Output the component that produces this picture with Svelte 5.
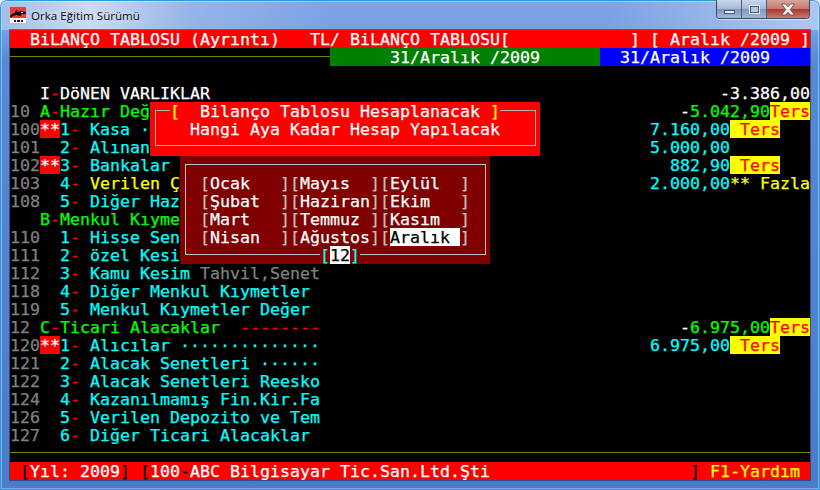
<script>
  const g = 'gray', c = 'cyan', w = 'white', l = 'lime', r = 'red', y = 'yellow';
  const STAR = 'star', T = 'ters';

  function build(items) {
    let col = 0;
    const out = [];
    for (const [at, text, cls] of items) {
      if (at > col) out.push({ text: ' '.repeat(at - col), cls: '' });
      out.push({ text, cls });
      col = at + [...text].length;
    }
    return out;
  }

  function acct(code, star, num, label, labelCls = c) {
    const items = [[0, code, g]];
    if (star) items.push([3, '**', STAR]);
    items.push([5, num, c], [6, '-', r], [8, label, labelCls]);
    return items;
  }

  const rows = [
    [[2, 'BiLANÇO TABLOSU (Ayrıntı)', 'barw'], [30, 'TL/ BiLANÇO TABLOSU[', 'barw'], [62, '] [ Aralık /2009 ]', 'barw']],
    [],
    [],
    [[3, 'I', w], [4, '-', r], [5, 'DöNEN VARLIKLAR', w], [71, '-3.386,00', w]],
    [[0, '10', g], [3, 'A', l], [4, '-', r], [5, 'Hazır Değ', l], [67, '-', w], [68, '5.042,90', l], [76, 'Ters', T]],
    [...acct('100', true, '1', 'Kasa ·'), [64, '7.160,00', c], [72, ' Ters', T]],
    [...acct('101', false, '2', 'Alınan'), [64, '5.000,00', c]],
    [...acct('102', true, '3', 'Bankalar'), [66, '882,90', c], [72, ' Ters', T]],
    [...acct('103', false, '4', 'Verilen Ç', y), [64, '2.000,00', c], [72, '** Fazla', y]],
    [...acct('108', false, '5', 'Diğer Haz')],
    [[3, 'B', l], [4, '-', r], [5, 'Menkul Kıyme', l]],
    [...acct('110', false, '1', 'Hisse Sen')],
    [...acct('111', false, '2', 'özel Kesi')],
    [...acct('112', false, '3', 'Kamu Kesim'), [19, 'Tahvil,Senet', g]],
    [...acct('118', false, '4', 'Diğer Menkul Kıymetler')],
    [...acct('119', false, '5', 'Menkul Kıymetler Değer')],
    [[0, '12', g], [3, 'C', l], [4, '-', r], [5, 'Ticari Alacaklar', l], [23, '--------', r], [67, '-', w], [68, '6.975,00', l], [76, 'Ters', T]],
    [...acct('120', true, '1', 'Alıcılar'), [17, '··············', c], [64, '6.975,00', c], [72, ' Ters', T]],
    [...acct('121', false, '2', 'Alacak Senetleri'), [25, '······', c]],
    [...acct('122', false, '3', 'Alacak Senetleri Reesko')],
    [...acct('124', false, '4', 'Kazanılmamış Fin.Kir.Fa')],
    [...acct('126', false, '5', 'Verilen Depozito ve Tem')],
    [...acct('127', false, '6', 'Diğer Ticari Alacaklar')],
    [],
  ].map(build);

  const status = build([
    [1, '[', 'blk'], [2, 'Yıl: 2009', 'barw'], [11, ']', 'blk'],
    [13, '[', 'blk'], [14, '100', 'barw'], [17, '-', 'blk'], [18, 'ABC Bilgisayar Tic.San.Ltd.Şti', 'barw'],
    [68, ']', 'blk'], [70, 'F1-Yardım', 'bary'],
  ]);

  const months = [
    ['Ocak', 'Mayıs', 'Eylül'],
    ['Şubat', 'Haziran', 'Ekim'],
    ['Mart', 'Temmuz', 'Kasım'],
    ['Nisan', 'Ağustos', 'Aralık'],
  ];
  const heading = '  Bilanço Tablosu Hesaplanacak ';
</script>

<div class="win">
  <header class="title">
    <svg class="ico" viewBox="0 0 16 16" width="16" height="16" aria-hidden="true">
      <rect width="16" height="11" fill="#f03838"/>
      <rect y="11" width="16" height="5" fill="#fff"/>
      <path d="M0 9 L3 6.5 L5 6 L6 2.5 L7.5 5 L11 4 L16 5 L15.5 7 L12 7 L10 9 L7 8 L4 8.5 L1 10.5 Z" fill="#000"/>
      <rect x="11" y="5" width="2" height="1" fill="#fff"/>
      <rect x="4" y="13" width="2" height="2" fill="#222"/>
      <rect x="7" y="13" width="3" height="2" fill="#222"/>
      <rect x="11" y="13" width="2" height="2" fill="#222"/>
    </svg>
    <span class="cap">Orka Eğitim Sürümü</span>
    <div class="btns">
      <button class="b min" aria-label="Simge durumuna küçült"><i></i></button>
      <button class="b max" aria-label="Ekranı kapla"><i></i></button>
      <button class="b close" aria-label="Kapat">
        <svg viewBox="0 0 16 13" width="16" height="13"><path d="M1.5 1 H5.6 L8 3.8 L10.4 1 H14.5 L10.3 6.5 L14.5 12 H10.4 L8 9.2 L5.6 12 H1.5 L5.7 6.5 Z" fill="#f4f4f4" stroke="#70403c" stroke-width=".8"/></svg>
      </button>
    </div>
  </header>

  <main class="term">
    <div class="line bar-title">{#each rows[0] as s}<span class={s.cls}>{s.text}</span>{/each}</div>

    <div class="line dates">
      <div class="rule"></div>
      <div class="d-green"><span class="pad6">31/Aralık /2009</span></div>
      <div class="d-blue"><span class="pad2">31/Aralık /2009</span></div>
    </div>

    {#each rows.slice(2, 23) as row}
      <div class="line">{#each row as s}<span class={s.cls}>{s.text}</span>{/each}</div>
    {/each}

    <div class="line"><div class="rule full"></div></div>

    <div class="line bar-status">{#each status as s}<span class={s.cls}>{s.text}</span>{/each}</div>

    <section class="pop-red">
      <div class="frame"></div>
      <div class="pop-title"><span class="yel">[</span><span>{heading}</span><span class="yel">]</span></div>
      <div class="pop-sub">Hangi Aya Kadar Hesap Yapılacak</div>
    </section>

    <section class="pop-dark">
      <div class="frame"></div>
      <div class="grid">
        {#each months as row}
          {#each row as m}
            <div class="cell"><span class="brk">[</span><span class="name" class:sel={m === 'Aralık'}>{m}</span><span class="brk">]</span></div>
          {/each}
        {/each}
      </div>
      <div class="num"><span class="cy">[</span><span class="inp">12</span><span class="cy">]</span></div>
    </section>
  </main>
</div>

<style>
  :global(body) { margin: 0; background: #dfe7f0; }

  .win {
    width: 820px;
    height: 490px;
    box-sizing: border-box;
    padding: 0 10px 10px;
    display: flex;
    flex-direction: column;
    border-radius: 7px 7px 0 0;
    overflow: hidden;
    background:
      linear-gradient(90deg, rgba(195,212,238,.55) 0, rgba(210,224,244,.9) 90px, rgba(170,195,235,.55) 190px, rgba(110,150,222,0) 330px, rgba(110,150,222,0) 610px, rgba(190,210,240,.75) 800px) top / 100% 30px no-repeat,
      linear-gradient(180deg, #7ea4e4 0, #7aa0e2 30px, #5a88d4 60px, #4a7ccc 100%);
    box-shadow: inset 0 0 0 1px #2a9ae0, inset 0 0 0 2px rgba(255,255,255,.35);
  }

  .title {
    height: 30px;
    flex: none;
    display: flex;
    align-items: flex-start;
    padding-top: 7px;
    box-sizing: border-box;
  }
  .cap {
    margin-left: 5px;
    font: 11.6px/18px "Open Sans", "Noto Sans", sans-serif;
    color: #0a0a0a;
    text-shadow: 0 0 6px rgba(255,255,255,.9);
  }
  .btns {
    margin-left: auto;
    margin-top: -7px;
    display: flex;
    height: 18px;
    border: 1px solid #3a4a64;
    border-top: none;
    border-radius: 0 0 4px 4px;
    overflow: hidden;
    box-shadow: 0 1px 0 rgba(255,255,255,.5);
  }
  .b {
    padding: 0;
    margin: 0;
    border: none;
    border-right: 1px solid #4d5f7c;
    display: flex;
    align-items: center;
    justify-content: center;
    height: 18px;
    width: 25px;
    background: linear-gradient(180deg, #c9d6ea 0, #a6bad8 48%, #7f97bb 52%, #a4b8d6 100%);
  }
  .b.close {
    width: 42px;
    border-right: none;
    background: linear-gradient(180deg, #d8a59c 0, #c27a6e 48%, #a8392c 52%, #c77c6f 100%);
  }
  .min i { display: block; width: 11px; height: 4px; margin-top: 5px; background: #e9eef6; border: 1px solid #46566e; box-sizing: border-box; }
  .max i { display: block; width: 11px; height: 9px; border: 2px solid #46566e; outline: 1px solid #e8eef6; outline-offset: -1px; box-sizing: border-box; background: #b6c8e2; }

  .term {
    position: relative;
    width: 800px;
    height: 450px;
    background: #000;
    box-shadow: 0 0 0 1px rgba(20,40,80,.55);
    font-family: "DejaVu Sans Mono", "Liberation Mono", monospace;
    font-size: 16.61px;
    -webkit-text-stroke: 0.25px currentColor;
    color: #fff;
  }

  .line {
    position: relative;
    height: 18px;
    line-height: 20px;
    white-space: pre;
    overflow: hidden;
  }
  .line span { display: inline-block; height: 18px; vertical-align: top; }

  .bar-title, .bar-status { background: #f00; }

  .dates { display: flex; }
  .rule { width: 320px; height: 1px; margin-top: 8px; background: #808000; }
  .rule.full { width: 800px; }
  .d-green { width: 270px; background: #008000; }
  .d-blue { width: 210px; background: #00f; }
  .pad6 { margin-left: 60px; }
  .pad2 { margin-left: 20px; }

  .gray { color: #808080; }
  .cyan { color: #0ff; }
  .white, .barw { color: #fff; }
  .lime { color: #0f0; }
  .red { color: #f00; }
  .yellow, .bary { color: #ff0; }
  .blk { color: #000; }
  .star { background: #f00; color: #fff; }
  .ters { background: #ff0; color: #f00; }

  .pop-red {
    position: absolute;
    left: 140px;
    top: 72px;
    width: 390px;
    height: 54px;
    background: #f00;
    line-height: 20px;
  }
  .pop-red .frame {
    position: absolute;
    left: 5px;
    top: 8px;
    width: 381px;
    height: 36px;
    box-sizing: border-box;
    border: 1px solid #b0b0b0;
  }
  .pop-title {
    position: relative;
    margin-left: 20px;
    width: 330px;
    height: 18px;
    background: #f00;
    white-space: pre;
  }
  .pop-title .yel { color: #ff0; }
  .pop-sub { position: relative; margin-left: 40px; height: 18px; white-space: pre; }

  .pop-dark {
    position: absolute;
    left: 170px;
    top: 126px;
    width: 310px;
    height: 108px;
    background: #800000;
    line-height: 20px;
  }
  .pop-dark .frame {
    position: absolute;
    left: 5px;
    top: 8px;
    width: 301px;
    height: 91px;
    box-sizing: border-box;
    border: 1px solid #c0c0c0;
  }
  .grid {
    position: relative;
    padding: 18px 0 0 20px;
    display: grid;
    grid-template-columns: repeat(3, 90px);
    grid-auto-rows: 18px;
  }
  .cell { display: flex; height: 18px; }
  .brk { color: #c0c0c0; }
  .name { width: 70px; height: 18px; color: #fff; white-space: pre; }
  .sel { background: #fff; color: #000; }
  .num {
    position: absolute;
    left: 140px;
    top: 90px;
    width: 40px;
    height: 18px;
    background: #800000;
    display: flex;
  }
  .cy { color: #0ff; }
  .inp { background: #fff; color: #000; height: 18px; }
</style>
